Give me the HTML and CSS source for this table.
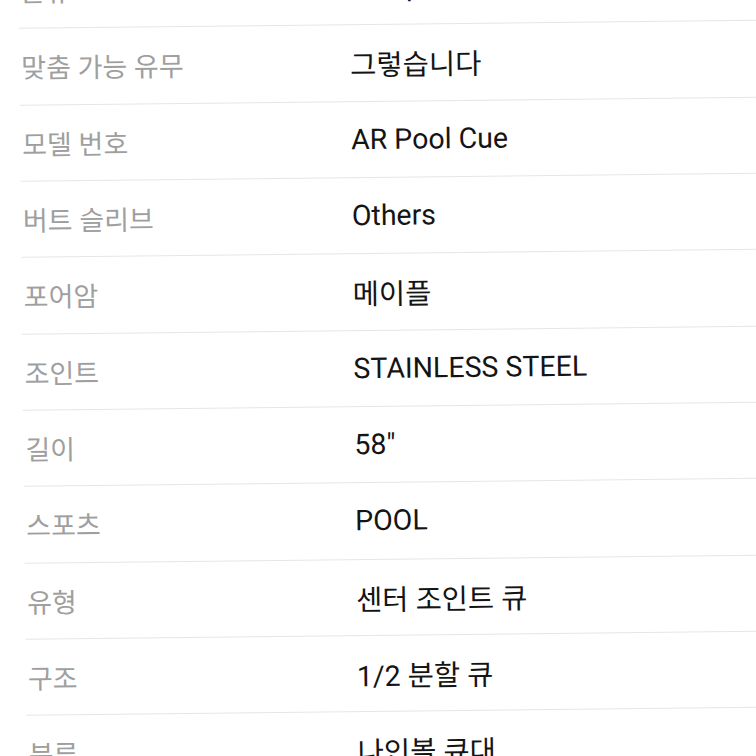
FILE: index.html
```html
<!DOCTYPE html>
<html lang="ko">
<head>
<meta charset="utf-8">
<title>상품 사양</title>
<link rel="stylesheet" href="styles.css">
</head>
<body>
<main class="sheet">
  <dl class="specs">
    <div class="row"><dt class="label">분류</dt><dd class="value">Cue pool</dd></div>
    <div class="row"><dt class="label">맞춤 가능 유무</dt><dd class="value">그렇습니다</dd></div>
    <div class="row"><dt class="label">모델 번호</dt><dd class="value">AR Pool Cue</dd></div>
    <div class="row"><dt class="label">버트 슬리브</dt><dd class="value">Others</dd></div>
    <div class="row"><dt class="label">포어암</dt><dd class="value">메이플</dd></div>
    <div class="row"><dt class="label">조인트</dt><dd class="value">STAINLESS STEEL</dd></div>
    <div class="row"><dt class="label">길이</dt><dd class="value">58"</dd></div>
    <div class="row"><dt class="label">스포츠</dt><dd class="value">POOL</dd></div>
    <div class="row"><dt class="label">유형</dt><dd class="value">센터 조인트 큐</dd></div>
    <div class="row"><dt class="label">구조</dt><dd class="value">1/2 분할 큐</dd></div>
    <div class="row"><dt class="label">분류</dt><dd class="value">나인볼 큐대</dd></div>
  </dl>
</main>
</body>
</html>
```

FILE: styles.css
```css
html, body {
  margin: 0;
  padding: 0;
  background: #ffffff;
  overflow: hidden;
  height: 756px;
}

.sheet {
  width: 820px;
  transform: rotate(-0.62deg);
  transform-origin: 0 0;
}

.specs {
  margin: -47px 0 0 18px;
  padding: 0;
  display: flex;
  flex-direction: column;
}

.row {
  box-sizing: border-box;
  height: 76.33px;
  display: grid;
  grid-template-columns: 331px 1fr;
  align-items: center;
  border-bottom: 1px solid #e6e6e6;
}

.label,
.value {
  margin: 0;
  font-family: Roboto, "Noto Sans CJK KR", sans-serif;
  font-feature-settings: "palt";
  white-space: nowrap;
}

.label {
  padding-left: 2px;
  font-size: 27px;
  color: #9f9f9f;
}

.value {
  font-size: 28.5px;
  color: #141414;
}
```
